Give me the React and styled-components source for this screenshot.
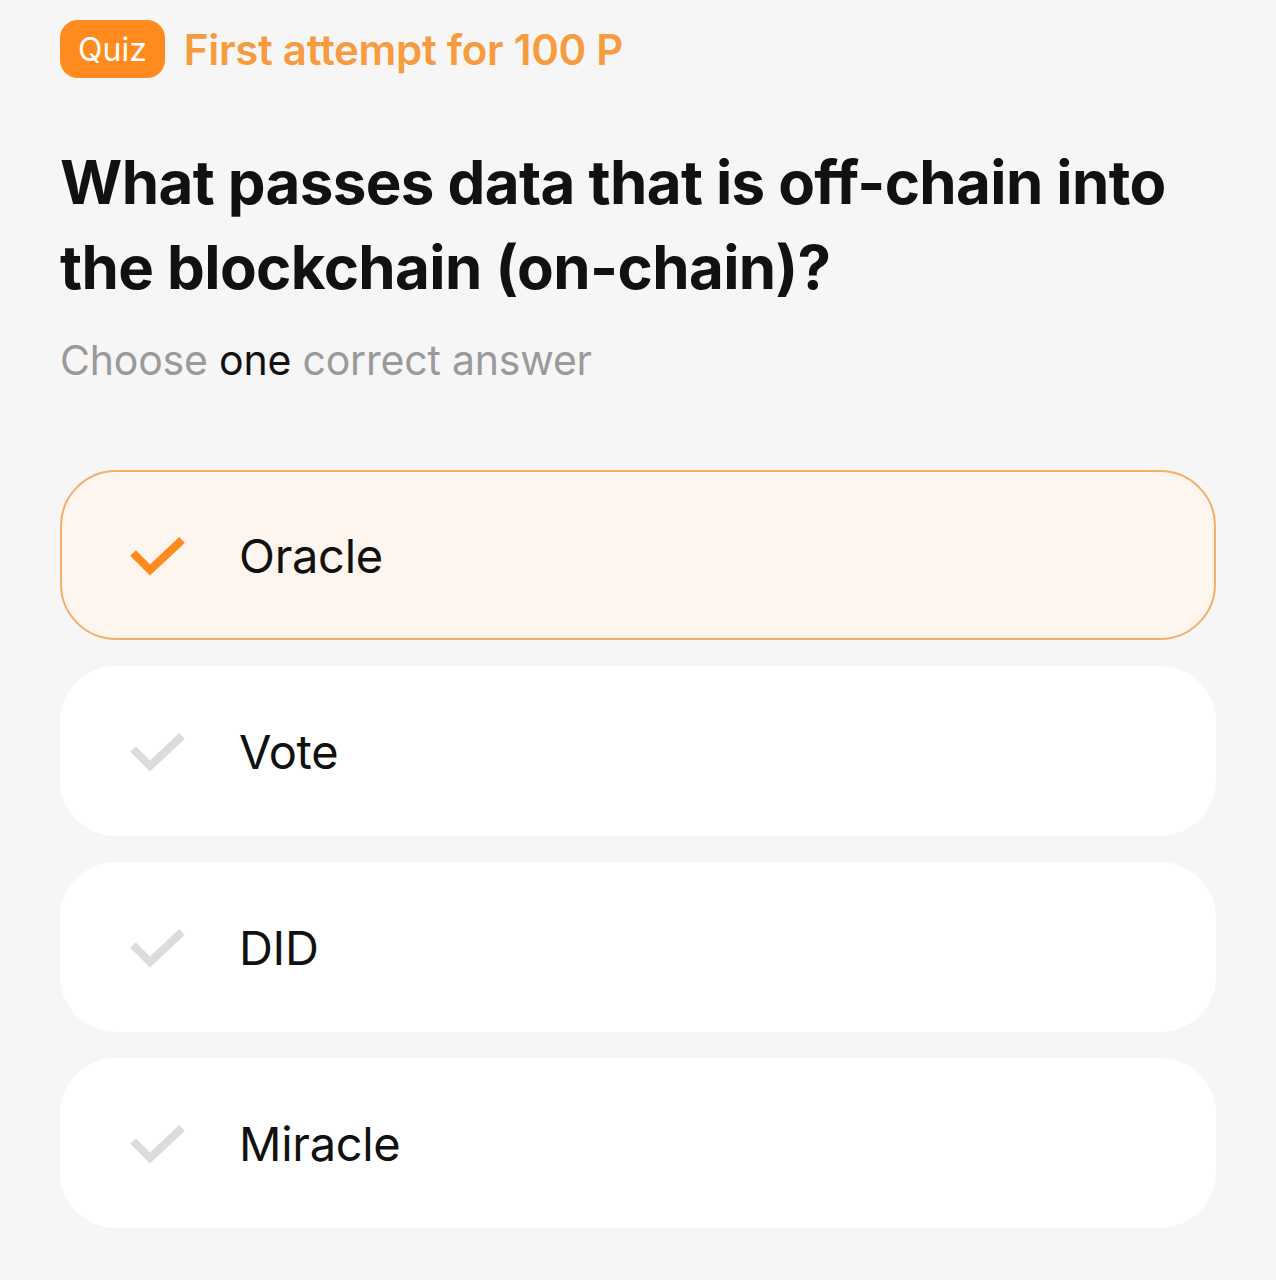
import React from 'react';
import styled, { createGlobalStyle } from 'styled-components';

const GlobalStyle = createGlobalStyle`
  html, body {
    margin: 0;
    background: #f6f6f6;
  }
  body {
    font-family: Inter, "Noto Sans", sans-serif;
  }
`;

const Page = styled.div`
  padding: 20px 60px 40px 60px;
  width: 1156px;
`;

const Header = styled.div`
  display: flex;
  align-items: center;
  gap: 19px;
`;

const Badge = styled.span`
  display: inline-flex;
  align-items: center;
  justify-content: center;
  height: 58px;
  padding: 0 18px;
  border-radius: 18px;
  background: #ff8a1e;
  color: #fff;
  font-size: 32px;
  font-weight: 400;
`;

const Reward = styled.span`
  color: #f89b3f;
  font-size: 42px;
  font-weight: 600;
  letter-spacing: -0.3px;
`;

const Question = styled.h1`
  margin: 62px 0 0 0;
  font-size: 60px;
  line-height: 85px;
  font-weight: 700;
  color: #111;
  letter-spacing: -0.6px;
`;

const Hint = styled.p`
  margin: 25px 0 0 0;
  font-size: 41px;
  line-height: 50px;
  color: #9a9a9a;
  letter-spacing: -0.2px;
`;

const Strong = styled.span`
  color: #111;
`;

const Options = styled.div`
  margin-top: 85px;
  display: flex;
  flex-direction: column;
  gap: 26px;
`;

const Option = styled.div`
  box-sizing: border-box;
  height: 170px;
  display: flex;
  align-items: center;
  gap: 52px;
  padding-left: 67px;
  border-radius: 56px;
  background: ${p => (p.$selected ? '#fef5ee' : '#ffffff')};
  border: 2px solid ${p => (p.$selected ? '#f4ae68' : 'transparent')};
`;

const Label = styled.span`
  font-size: 47px;
  color: #111;
  font-weight: 400;
  letter-spacing: -0.3px;
`;

const Check = ({ color }) => (
  <svg width="58" height="44" viewBox="0 0 58 44">
    <polyline
      points="4,20 21,37 53,7"
      fill="none"
      stroke={color}
      strokeWidth="8"
      strokeLinejoin="miter"
    />
  </svg>
);

const answers = ['Oracle', 'Vote', 'DID', 'Miracle'];

export default function App() {
  return (
    <>
      <GlobalStyle />
      <Page>
        <Header>
          <Badge>Quiz</Badge>
          <Reward>First attempt for 100 P</Reward>
        </Header>
        <Question>
          What passes data that is off-chain into the blockchain (on-chain)?
        </Question>
        <Hint>
          Choose <Strong>one</Strong> correct answer
        </Hint>
        <Options>
          {answers.map((a, i) => (
            <Option key={a} $selected={i === 0}>
              <Check color={i === 0 ? '#ff8a1e' : '#dcdcdc'} />
              <Label>{a}</Label>
            </Option>
          ))}
        </Options>
      </Page>
    </>
  );
}
